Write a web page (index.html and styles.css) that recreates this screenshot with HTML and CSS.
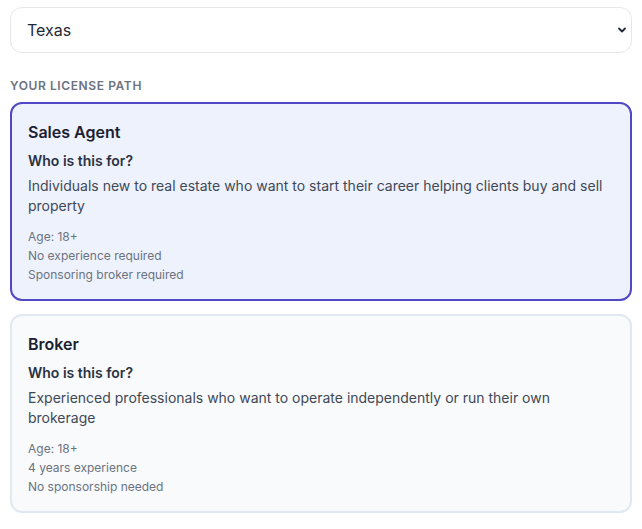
FILE: index.html
```html
<!DOCTYPE html>
<html>
<head>
<meta charset="utf-8">
<link rel="stylesheet" href="styles.css">
</head>
<body>
<div class="page">
  <div class="select-wrap">
    <select class="state-select">
      <option>Texas</option>
    </select>
    <svg class="chevron" width="10" height="10" viewBox="0 0 10 10"><path d="M2 3.5 L5 6.5 L8 3.5" fill="none" stroke="#1f2937" stroke-width="1.8" stroke-linecap="round" stroke-linejoin="round"/></svg>
  </div>
  <div class="section-label">YOUR LICENSE PATH</div>
  <div class="cards">
    <div class="card card-active">
      <div class="card-title">Sales Agent</div>
      <div class="card-sub">Who is this for?</div>
      <div class="card-desc">Individuals new to real estate who want to start their career helping clients buy and sell property</div>
      <ul class="reqs">
        <li>Age: 18+</li>
        <li>No experience required</li>
        <li>Sponsoring broker required</li>
      </ul>
    </div>
    <div class="card">
      <div class="card-title">Broker</div>
      <div class="card-sub">Who is this for?</div>
      <div class="card-desc">Experienced professionals who want to operate independently or run their own brokerage</div>
      <ul class="reqs">
        <li>Age: 18+</li>
        <li>4 years experience</li>
        <li>No sponsorship needed</li>
      </ul>
    </div>
  </div>
</div>
</body>
</html>
```

FILE: styles.css
```css
* { box-sizing: border-box; }
html, body { margin: 0; padding: 0; background: #ffffff; }
body { font-family: Inter, "Noto Sans", sans-serif; color: #1f2937; }
.page { padding: 7px 10px 10px 10px; }
.select-wrap { position: relative; }
.state-select {
  display: block;
  width: 100%;
  height: 46px;
  appearance: none;
  -webkit-appearance: none;
  border: 1px solid #e5e7eb;
  border-radius: 12px;
  background: #ffffff;
  padding: 0 16px;
  font-family: Inter, "Noto Sans", sans-serif;
  font-size: 16px;
  color: #1f2937;
}
.chevron { position: absolute; right: 5px; top: 18px; }
.section-label {
  margin-top: 25px;
  font-size: 12px;
  font-weight: 600;
  letter-spacing: 0.05em;
  color: #6b7280;
  line-height: 16px;
}
.cards { display: flex; flex-direction: column; gap: 13px; margin-top: 8px; }
.card {
  border: 2px solid #e2e8f0;
  border-radius: 12px;
  background: #f8fafc;
  padding: 15px 16px 15px 16px;
}
.card-active { border-color: #5048c4; background: #eef2fd; }
.card-title { font-size: 16px; font-weight: 600; line-height: 26px; color: #1a2031; }
.card-sub { margin-top: 7px; font-size: 14px; font-weight: 600; line-height: 18px; color: #2a3342; }
.card-desc { margin-top: 6px; font-size: 14px; line-height: 20px; color: #3f4857; }
.reqs { list-style: none; margin: 11px 0 0 0; padding: 0; font-size: 12px; line-height: 19px; color: #6b7280; }
```
